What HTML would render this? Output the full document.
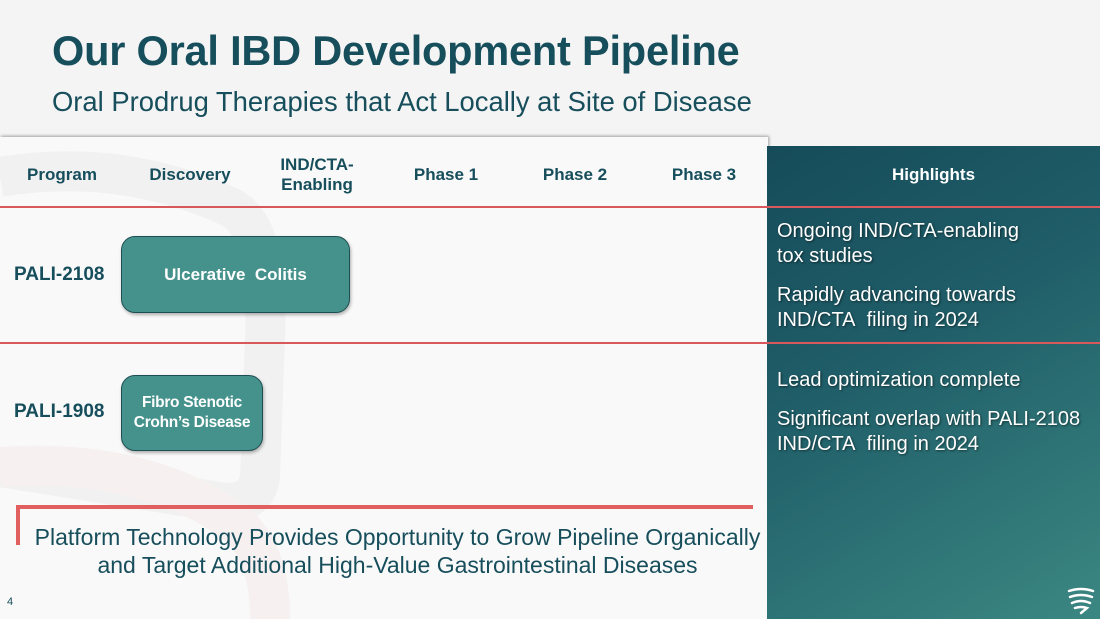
<!DOCTYPE html>
<html><head><meta charset="utf-8"><style>
*{margin:0;padding:0;box-sizing:border-box}
body{width:1100px;height:619px;overflow:hidden;background:#f4f4f4;font-family:"Liberation Sans",sans-serif;position:relative;color:#1a4d5a}
.a{position:absolute}
h1{position:absolute;left:52px;top:27px;font-size:41.5px;font-weight:bold;color:#174e5c;letter-spacing:-0.2px}
h2{position:absolute;left:52px;top:86px;font-size:27.4px;font-weight:normal;color:#174e5c}
.main{position:absolute;left:0;top:137px;width:768px;height:482px;background:#f9f9f9;box-shadow:1px -1px 3px rgba(0,0,0,.35)}
.panel{position:absolute;left:767px;top:146px;width:333px;height:473px;background:linear-gradient(150deg,#164c5a 0%,#1f5d68 40%,#3b8782 100%)}
.hd{position:absolute;font-size:17px;font-weight:bold;color:#174e5c;text-align:center;line-height:20px}
.red{position:absolute;left:0;width:1100px;height:2px;background:#d9585c}
.prog{position:absolute;left:14px;font-size:19px;font-weight:bold;color:#174e5c}
.box{position:absolute;background:#45918b;border:1.5px solid #1d4f52;border-radius:14px;color:#fff;font-weight:bold;display:flex;align-items:center;justify-content:center;text-align:center;box-shadow:1px 2px 3px rgba(0,0,0,.3)}
.hl{position:absolute;left:777px;color:#fff;font-size:20px;line-height:25px;text-shadow:1px 1px 2px rgba(0,0,0,.5);white-space:nowrap}
</style></head><body>
<h1>Our Oral IBD Development Pipeline</h1>
<h2>Oral Prodrug Therapies that Act Locally at Site of Disease</h2>
<div class="main"></div>
<svg class="a" style="left:0;top:137px" width="768" height="482"><path d="M0 40 Q120 20 230 70 Q270 90 265 200 L260 340 Q255 370 220 365 L0 330" fill="none" stroke="#f1f1f1" stroke-width="40"/><path d="M0 330 Q150 320 240 390 Q270 420 270 482" fill="none" stroke="#f7f0f0" stroke-width="40"/></svg>
<div class="panel"></div>
<div class="hd" style="left:12px;top:165px;width:100px">Program</div>
<div class="hd" style="left:135px;top:165px;width:110px">Discovery</div>
<div class="hd" style="left:262px;top:155px;width:110px">IND/CTA-<br>Enabling</div>
<div class="hd" style="left:391px;top:165px;width:110px">Phase 1</div>
<div class="hd" style="left:520px;top:165px;width:110px">Phase 2</div>
<div class="hd" style="left:649px;top:165px;width:110px">Phase 3</div>
<div class="hd" style="left:767px;top:165px;width:333px;color:#fff">Highlights</div>
<div class="red" style="top:206px"></div>
<div class="red" style="top:342px"></div>
<div class="prog" style="top:264px">PALI-2108</div>
<div class="prog" style="top:401px">PALI-1908</div>
<div class="box" style="left:121px;top:236px;width:229px;height:77px;font-size:17px">Ulcerative&nbsp; Colitis</div>
<div class="box" style="left:121px;top:375px;width:142px;height:76px;font-size:15.5px;line-height:20px;letter-spacing:-0.3px">Fibro Stenotic<br>Crohn’s Disease</div>
<div class="hl" style="top:219px">Ongoing IND/CTA-enabling<br>tox studies</div>
<div class="hl" style="top:283px">Rapidly advancing towards<br>IND/CTA&nbsp; filing in 2024</div>
<div class="hl" style="top:368px">Lead optimization complete</div>
<div class="hl" style="top:407px">Significant overlap with PALI-2108<br>IND/CTA&nbsp; filing in 2024</div>
<div class="a" style="left:16px;top:505px;width:737px;height:4px;background:#e0605f"></div>
<div class="a" style="left:16px;top:505px;width:4px;height:40px;background:#e0605f"></div>
<div class="a" style="left:20px;top:523px;width:755px;text-align:center;font-size:23px;line-height:28px;color:#174e5c;white-space:nowrap">Platform Technology Provides Opportunity to Grow Pipeline Organically<br>and Target Additional High-Value Gastrointestinal Diseases</div>
<div class="a" style="left:7px;top:596px;font-size:11px;color:#174e5c">4</div>
<svg class="a" style="left:1066px;top:587px" width="30" height="28" viewBox="0 0 30 28"><g fill="none" stroke="#fff" stroke-width="2.5" stroke-linecap="round"><path d="M3 4 Q15 0 27 4"/><path d="M4 10 Q15 6 26 10"/><path d="M6 16 Q15 12 24 16"/><path d="M9 21 Q15 19 21 21 L15 26"/></g></svg>
</body></html>
